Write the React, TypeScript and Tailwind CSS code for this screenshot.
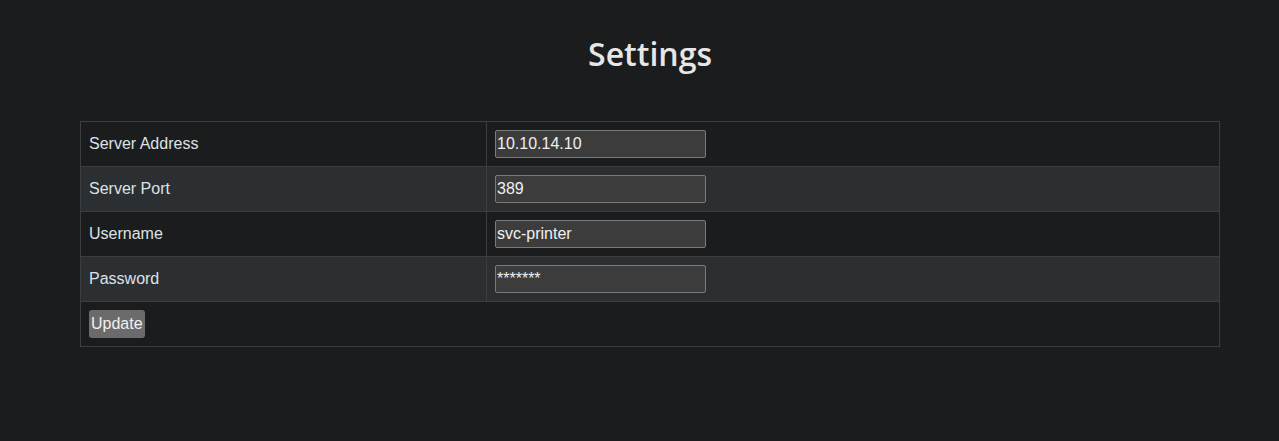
import React from 'react';

const FIELDS = [
  { label: 'Server Address', value: '10.10.14.10', type: 'text' },
  { label: 'Server Port', value: '389', type: 'text' },
  { label: 'Username', value: 'svc-printer', type: 'text' },
  { label: 'Password', value: '*******', type: 'text' },
];

export default function App() {
  return (
    <div className="min-h-[441px] w-full bg-[#1b1c1e] text-[#dee2e6] font-['Liberation_Sans',Arial,sans-serif]">
      <div className="ml-[80px] w-[1140px] pt-[34px]">
        <h1 className="text-center text-[32px] font-semibold leading-[40px] text-[#e6e6e6] font-['Open_Sans',sans-serif] tracking-[0px]">
          Settings
        </h1>

        <form className="mt-[47px]" onSubmit={(e) => e.preventDefault()}>
          <table className="w-full border-collapse border border-[#3b3d3f] text-[16px]">
            <tbody>
              {FIELDS.map((f, i) => (
                <tr key={f.label} className={i % 2 === 1 ? 'bg-[#2b2f32]' : 'bg-[#1b1c1e]'}>
                  <td className="h-[45px] w-[406px] border border-[#3b3d3f] px-2 align-middle">{f.label}</td>
                  <td className="h-[45px] border border-[#3b3d3f] px-2 align-middle">
                    <input
                      type={f.type}
                      defaultValue={f.value}
                      className="block h-[28px] w-[211px] rounded-[2px] border border-[#7a7a7a] bg-[#3c3c3c] px-[1px] text-[16px] text-[#f0f0f0] outline-none"
                    />
                  </td>
                </tr>
              ))}
              <tr className="bg-[#1b1c1e]">
                <td colSpan={2} className="h-[45px] border border-[#3b3d3f] px-2 align-middle">
                  <button
                    type="submit"
                    className="block h-[28px] rounded-[3px] bg-[#6b6b6b] px-[2px] text-[16px] text-[#f0f0f0]"
                  >
                    Update
                  </button>
                </td>
              </tr>
            </tbody>
          </table>
        </form>
      </div>
    </div>
  );
}
